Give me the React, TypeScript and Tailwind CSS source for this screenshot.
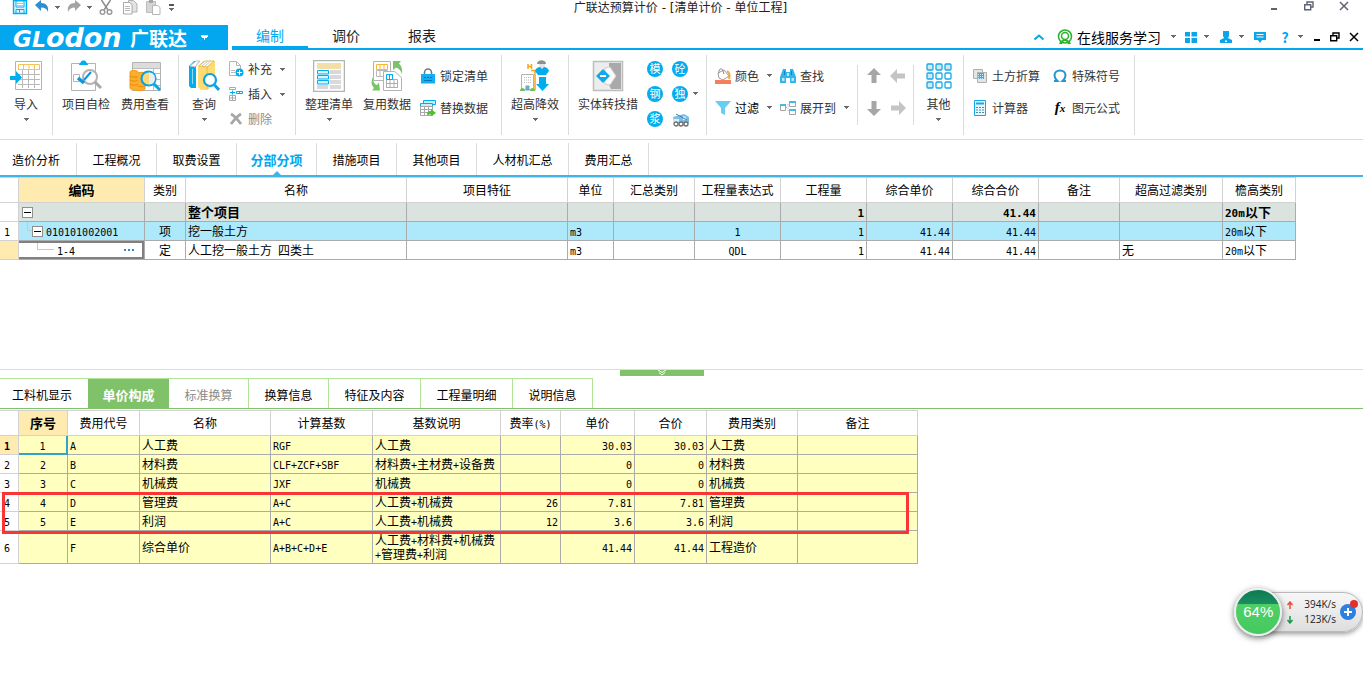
import type { ReactNode } from "react";

/* ---------- text helpers ---------- */

// Latin runs are set in a half-width monospace beside full-width Chinese.
function Mixed({ text, large = false }: { text: string; large?: boolean }) {
  return (
    <>
      {text.split(/([\x20-\x7e]+)/).map((part, i) =>
        i % 2 === 1 ? (
          <span
            key={i}
            className={`whitespace-pre font-['DejaVu_Sans_Mono',monospace] leading-none ${large ? "text-[11px]" : "text-[10px]"}`}
          >
            {part}
          </span>
        ) : (
          part
        ),
      )}
    </>
  );
}

function Caret({ className = "text-[#6b6b6b]" }: { className?: string }) {
  return (
    <svg viewBox="0 0 5 3" className={`h-[3px] w-[5px] shrink-0 ${className}`} shapeRendering="crispEdges" aria-hidden="true">
      <path d="M0 0h5v1H0zM1 1h3v1H1zM2 2h1v1H2z" fill="currentColor" />
    </svg>
  );
}

/* ---------- icons ---------- */

function Svg({ size, className = "", children }: { size: number; className?: string; children: ReactNode }) {
  return (
    <svg viewBox={`0 0 ${size} ${size}`} width={size} height={size} fill="none" className={`shrink-0 ${className}`} aria-hidden="true">
      {children}
    </svg>
  );
}

const BLUE = "#00aeef";

const SaveIcon = () => (
  <Svg size={16}>
    <path d="M1.500.5h13v13h-13z" fill="#d9f2fc" stroke={BLUE} strokeWidth="1.400" />
    <path d="M4 1h8v6H4z" fill="#fff" stroke={BLUE} />
    <path d="M5 3.500h6M5 5.500h6" stroke="#8ad4f3" />
    <path d="M4 13V9.500h8V13M7.500 10v2.500" stroke={BLUE} />
  </Svg>
);
const UndoIcon = () => (
  <Svg size={16}>
    <path d="M1 5 7 0v3c5 0 8 3 7 9-1-3-3-4.500-7-4.500V11z" fill="#2e8fd0" />
  </Svg>
);
const RedoIcon = () => (
  <Svg size={16}>
    <path d="M15 5 9 0v3C4 3 1 6 2 12c1-3 3-4.500 7-4.500V11z" fill="#a3a3a3" />
  </Svg>
);
const CutIcon = () => (
  <Svg size={16}>
    <path d="M3.500 0 10 10M12.500 0 6 10" stroke="#8d8d8d" strokeWidth="1.500" />
    <circle cx="4.500" cy="12" r="2.300" stroke="#9a9a9a" strokeWidth="1.500" />
    <circle cx="11.500" cy="12" r="2.300" stroke="#9a9a9a" strokeWidth="1.500" />
  </Svg>
);
const CopyIcon = () => (
  <Svg size={16}>
    <path d="M6.500 10.500v-10h5l3.500 3.500v8h-5" fill="#e3e3e3" stroke="#b0b0b0" />
    <path d="M1.500 2.500h6l2.500 2v9.500H1.500z" fill="#fff" stroke="#a8a8a8" />
    <path d="M3 6.500h5M3 8.500h5M3 10.500h5" stroke="#b9b9b9" />
  </Svg>
);
const PasteIcon = () => (
  <Svg size={16}>
    <path d="M1.500 1.500h9v11h-9z" fill="#d6d6d6" stroke="#bdbdbd" />
    <path d="M4 0h4v3H4z" fill="#a5a5a5" />
    <path d="M7.500 5.500h5l2.500 2v7H7.500z" fill="#fff" stroke="#b5b5b5" />
  </Svg>
);

const ImportIcon = () => (
  <Svg size={32}>
    <path d="M5.500 1.500h26v28h-26z" fill="#fff" stroke="#b3b3b3" />
    <path d="M8 9.500h22M8 14.500h22M8 19.500h22M8 24.500h22M12.500 9v19M18.500 9v19M24.500 9v19" stroke="#b9b9b9" />
    <path d="M8.500 4.500h21v5h-21zM13.500 4v5M19 4v5M24.500 4v5" stroke="#f6c35a" />
    <path d="M0 16h6v-5l6 6.500-6 6.500v-4H0z" fill={BLUE} />
  </Svg>
);
const CheckDocIcon = () => (
  <Svg size={32}>
    <path d="M1.500 3.500h24v27h-24z" fill="#fff" stroke="#b3b3b3" />
    <path d="M9 5c0-2 2-2 2-3.500C12 0 15 0 16 1.500 16 3 18 3 18 5z" fill={BLUE} />
    <path d="M3.500 14.500h6v7h-6z" stroke="#b5b5b5" />
    <circle cx="20" cy="17" r="7" fill="#fff" stroke="#b3b3b3" strokeWidth="2" />
    <path d="m25 22 6 6" stroke="#a8a8a8" strokeWidth="3" />
    <path d="m8 18 6 5" stroke="#0a96e0" strokeWidth="3.500" />
    <path d="m14 20 7-8" stroke="#0a96e0" strokeWidth="2" />
  </Svg>
);
const CostIcon = () => (
  <Svg size={32}>
    <path d="M3.500 2.500h28v28h-28z" fill="#fff" stroke="#b3b3b3" />
    <path d="M4 3h27v5H4z" fill="#dcdcdc" />
    <path d="M4 8.500h27M17 13.500h14M17 19.500h14M17 25.500h14M24.500 8v22" stroke="#bdbdbd" />
    <path d="M1 12c0-2 8-2 8 0v1c2-1 7-1 7 1v15c-2 2-7 2-9 1-4 0-6-1-6-2z" fill="#ffae2b" stroke="#f39a12" />
    <path d="M1 16c2 1.500 6 1.500 8 .5M1 20c2 1.500 6 1.500 8 .5M1 24c2 1.500 6 1.500 8 .5M9 26c2 1 5 1 7 0" stroke="#e08b10" />
    <circle cx="19.500" cy="18.500" r="7" fill="#ffd874" stroke="#0aa4e6" strokeWidth="2.200" />
    <path d="M20 12.500c4 0 6 3 6 6s-2 6-6 6z" fill="#e9eef2" />
    <path d="m25 24 6 6" stroke="#0aa4e6" strokeWidth="3" />
  </Svg>
);
const BooksIcon = () => (
  <Svg size={32}>
    <path d="M1 6 6 1h6L8 6v22H3l-2-2z" fill={BLUE} />
    <path d="m2 6 6-5h4L7 7z" fill="#fff" stroke="#bcbcbc" />
    <path d="M4.500 9v15" stroke="#8bdcf8" />
    <path d="M10 6 15 1h12v24l-8 5h-6l-3-3z" fill="#ffdb73" />
    <path d="m11 6 6-5h9l-7 6z" fill="#fff" stroke="#e9b94a" />
    <path d="m14 6 6-5M17 6l6-5" stroke="#c9c9c9" />
    <path d="M19 7v22" stroke="#f1bb45" />
    <circle cx="22" cy="20" r="6" fill="#fff" stroke="#0aa4e6" strokeWidth="2.200" />
    <path d="m26.500 25 4.500 5" stroke="#0aa4e6" strokeWidth="3" />
  </Svg>
);
const AddDocIcon = () => (
  <Svg size={16}>
    <path d="M1.500.5h7l4 4v10h-11z" fill="#fff" stroke="#b5b5b5" />
    <path d="M8.500.5v4h4M3 9.500h4M3 11.500h4" stroke="#b5b5b5" />
    <circle cx="11.500" cy="11.500" r="4" fill={BLUE} />
    <path d="M11.500 9v5M9 11.500h5" stroke="#fff" />
  </Svg>
);
const InsertIcon = () => (
  <Svg size={16}>
    <path d="M1.500 1.500h6v2h-6zM1.500 9.500h6v5h-6zM1.500 12h6M4.500 9.500v5" stroke="#a9a9a9" />
    <path d="M2 6.500h5M4.500 4.500v4M8.500 5.500h6v2h-6zM11.500 5v3" stroke={BLUE} />
  </Svg>
);
const DeleteIcon = () => (
  <Svg size={16}>
    <path d="M3 3c4 2 7 6 10 10M13 3C9 5 6 9 3 13" stroke="#a6a6a6" strokeWidth="2.800" />
  </Svg>
);
const ArrangeIcon = () => (
  <Svg size={32}>
    <path d="M.5.500h31v31H.5z" fill="#fff" stroke="#b3b3b3" strokeWidth="1.500" />
    <path d="M4 3h24v6H4z" fill="#f2dfa8" />
    <path d="M17 10h11v4H17zM17 15h11v4H17zM17 20h11v4H17zM17 25h11v4H17zM4 25h11v4H4z" fill="#d9d9dc" />
    <path d="M4.500 10.500h11v3.500h-11zM4.500 15.500h11v3.500h-11zM4.500 20.500h11v3.500h-11z" fill="#d9f2fc" stroke={BLUE} />
  </Svg>
);
const ReuseIcon = () => (
  <Svg size={32}>
    <path d="M2.500 1.500h17v19h-17z" fill="#fff" stroke="#b3b3b3" />
    <path d="M5.500 10.500h11v6h-11zM9 10v7M13 10v7" stroke="#b9b9b9" />
    <path d="M5.500 4.500h11v5h-11zM9 4v5M13 4v5" stroke="#f6b733" />
    <path d="M12.500 11.500h11l7 6v13h-18z" fill="#fff" stroke="#b3b3b3" />
    <path d="M15.500 19.500h11v8h-11zM19 19v8M23 19v8M15.500 23.500h11" stroke="#adadad" />
    <path d="M15.500 14.500h6v5h-6zM18.500 14v5" stroke={BLUE} />
    <path d="M22 1h8l-2 2.500c3 3 3.500 6 3 11-1-4-3-6-6-7L22 10z" fill="#79c36a" />
    <path d="M2 17c0 4 1 7 4 8l2-2.500 1 8H1l2-2.500C0 25 0 21 2 17z" fill="#79c36a" />
  </Svg>
);
const LockIcon = () => (
  <Svg size={16}>
    <path d="M4.500 7V4.500a3.500 3.500 0 0 1 7 0V7" stroke="#6f7a82" strokeWidth="1.600" />
    <path d="M1 6h14v9.500H1z" fill="#12aef0" />
    <path d="M4 9.500h2M7 9.500h2M10 9.500h2M4 12.500h8" stroke="#0770b4" />
  </Svg>
);
const ReplaceIcon = () => (
  <Svg size={16}>
    <path d="M3.500.5h12v4h-12z" fill="#c8eefa" stroke={BLUE} />
    <path d="M.5 3.500h12v3H.5z" fill="#c8eefa" stroke={BLUE} />
    <path d="M.5 6.500h12v9H.5zM.5 9.500h12M.5 12.500h12M4.500 6v9M8.500 6v9" fill="#fff" stroke="#a7a7a7" />
    <path d="M7 15c0-3 1-4 4-4V9l5 4-5 3.500v-2c-2 0-3 0-4 .5z" fill="#4fc02e" />
  </Svg>
);
const HeightIcon = () => (
  <Svg size={32}>
    <path d="M9 4v5M12.500 4v5M9 6.500h4M12 10.500h4v20" stroke="#f6a51f" strokeWidth="1.500" />
    <path d="M2.500 14.500h12v15h-12z" fill="#fff" stroke="#b3b3b3" />
    <path d="M5 17.500h7M5 20h7M5 22.500h7" stroke="#bdbdbd" strokeDasharray="1 1" />
    <path d="M6.500 25.500h4v5h-4z" fill="#6fa9c4" />
    <path d="M1 31c0-4 5-4 5 0zM11 31c0-4 5-4 5 0z" fill="#6fbf5f" />
    <path d="M18 4c0-5 9-5 9 0z" fill="#8f8f8f" />
    <path d="M20 4h6c0 4-1 5-3 5s-3-1-3-5z" fill="#e4e4e4" />
    <path d="M16 11c1-3 3-4 5-4l2 2 2-2c2 0 4 1 5 4l-3 4H19z" fill={BLUE} />
    <path d="M20 17h7v7h3l-6.500 7-6.500-7h3z" fill={BLUE} />
  </Svg>
);
const EntityIcon = () => (
  <Svg size={32}>
    <path d="M1.500 1.500h29v29h-29z" fill="#ededed" stroke="#bdbdbd" strokeWidth="1.500" />
    <path d="M17 3h12v26H19l-2-4z" fill="#a9a9a9" />
    <path d="m13 8 5-1 6 9-6 9-5-1z" fill="#fafafa" stroke="#cfcfcf" />
    <path d="m11 9 7 7-7 7-7-7z" fill="#0fa9ec" />
    <path d="M8 16h6" stroke="#fff" strokeWidth="2" />
  </Svg>
);
const TruckIcon = () => (
  <Svg size={18}>
    <path d="M1 6 12 3l5 3v6H2z" fill="#7fbce4" />
    <path d="M2 8h5v3H2zM11 5l3 1v3h-3z" fill="#d9effa" />
    <path d="m4 3 11 6" stroke="#3f83b4" />
    <circle cx="4" cy="13" r="2" fill="#fff" stroke="#6c6c6c" strokeWidth="1.300" />
    <circle cx="9" cy="13" r="2" fill="#fff" stroke="#6c6c6c" strokeWidth="1.300" />
    <circle cx="14" cy="13" r="2" fill="#fff" stroke="#6c6c6c" strokeWidth="1.300" />
  </Svg>
);
const ColorIcon = () => (
  <Svg size={16}>
    <path d="m3 5 6-3 5 6-6 4-4-2z" fill="#fff" stroke="#a29a94" />
    <path d="M4 5C3 1 7-1 8 3l1 3" stroke="#8d8782" />
    <path d="M12 3c3 2 3 5 2 8" stroke="#f5a545" strokeWidth="2" />
    <path d="M0 12h16v4H0z" fill="#f47f5e" />
  </Svg>
);
const FilterIcon = () => (
  <Svg size={16}>
    <path d="M0 1h16l-6 7v7l-4-2V8z" fill="#67cdf2" />
  </Svg>
);
const BinocularsIcon = () => (
  <Svg size={16}>
    <path d="M3 1h3v3h4V1h3l3 8v6h-6v-5H6v5H0V9z" fill="#2fb6ea" />
    <path d="M2 10h2.500v3H2zM11.500 10H14v3h-2.500zM7 5h2v3H7z" fill="#b9e8f8" />
    <path d="M4.500 3v4M11.500 3v4" stroke="#1883b8" />
  </Svg>
);
const ExpandIcon = () => (
  <Svg size={16}>
    <path d="M.5 4.500h5v6h-5zM9.500 1.500h6v5h-6zM9.500 9.500h6v5h-6z" fill="#fff" stroke="#a3a3a3" />
    <path d="M0 5h6M9 2h7M9 10h7" stroke="#46b9e8" strokeWidth="2" />
    <path d="M6 7.500h2M8 4v8" stroke="#b5b5b5" strokeDasharray="1 1" />
  </Svg>
);
const GridIcon = () => (
  <Svg size={26}>
    {[0, 1, 2].flatMap((r) =>
      [0, 1, 2].map((c) => (
        <rect
          key={`${r}${c}`}
          x={1 + c * 9}
          y={1 + r * 9}
          width="6"
          height="6"
          rx="1"
          fill={r === 0 || c === 0 ? "#cfe9f5" : "#fff"}
          stroke="#14a9e8"
          strokeWidth="1.300"
        />
      )),
    )}
  </Svg>
);
const EarthIcon = () => (
  <Svg size={16}>
    <path d="M1.500 1.500h9v9h-9z" fill="#e4e4e4" stroke="#b0b0b0" />
    <path d="M5.500 4.500h9v10h-9z" fill="#e4e4e4" stroke="#b0b0b0" />
    <path d="M6 5h6v6H6z" fill="#2fb4e6" />
    <path d="M6 6.500h6M6 8.500h6M6 10.500h6" stroke="#bfe9f8" strokeDasharray="1 1" />
  </Svg>
);
const CalcIcon = () => (
  <Svg size={16}>
    <path d="M2.500.500h11v15h-11z" fill="#eaf8fe" stroke="#12a8e6" />
    <path d="M4 3.500h8" stroke="#12a8e6" strokeWidth="2" />
    <path d="M4 7.500h8M4 10h8M4 12.500h8" stroke="#3d8cb8" strokeDasharray="2 1" />
  </Svg>
);
const OmegaIcon = () => (
  <Svg size={16}>
    <path
      d="M2 13h3.500c-2-2-3-3.500-3-5.500C2.500 4.500 5 2.500 8 2.500s5.500 2 5.500 5c0 2-1 3.500-3 5.500H14"
      stroke="#2196d3"
      strokeWidth="2"
    />
  </Svg>
);
const BigArrow = ({ className, color }: { className?: string; color: string }) => (
  <Svg size={16} className={className}>
    <path d="m8 0 7 7h-4.500v8h-5V7H1z" fill={color} />
  </Svg>
);

const HeadsetIcon = () => (
  <Svg size={16}>
    <circle cx="8" cy="7.500" r="6.500" stroke="#2bb52b" strokeWidth="1.600" />
    <circle cx="8" cy="7" r="3.500" stroke="#2bb52b" strokeWidth="1.500" />
    <path d="M2 15c1-3 3-4.500 6-4.500s5 1.500 6 4.500h-3l-2-3H7l-2 3z" fill="#2bb52b" />
  </Svg>
);
const TilesIcon = () => (
  <Svg size={12}>
    <path d="M0 1h5v4.500H0zM6.500 1H12v4.500H6.500zM0 7h5v5H0zM6.500 7H12v5H6.500z" fill="#0aa5ea" />
  </Svg>
);
const PersonIcon = () => (
  <Svg size={14}>
    <path d="M4 1h6v5L9 8l4 2v3H1v-3l4-2-1-2z" fill="#0aa5ea" />
    <path d="m6 10 1 1 1-1v2H6z" fill="#fff" />
  </Svg>
);
const ChatIcon = () => (
  <Svg size={12}>
    <path d="M0 1h12v8H8l-2 3-2-3H0z" fill="#0aa5ea" />
    <path d="M2.500 3.500h7M2.500 6h7" stroke="#fff" />
  </Svg>
);
const RestoreIcon = () => (
  <Svg size={10}>
    <path d="M3 3V1h6v5H7" stroke="currentColor" strokeWidth="1.400" />
    <path d="M.7 3.700h6v5h-6z" stroke="currentColor" strokeWidth="1.400" />
  </Svg>
);
const CloseIcon = () => (
  <Svg size={10}>
    <path d="m1 1 8 8M9 1 1 9" stroke="currentColor" strokeWidth="1.500" />
  </Svg>
);
const MinIcon = () => (
  <Svg size={10}>
    <path d="M2 8h6" stroke="currentColor" strokeWidth="2" />
  </Svg>
);

/* ---------- ribbon parts ---------- */

function Group({ children, className = "", short = false }: { children: ReactNode; className?: string; short?: boolean }) {
  return (
    <div className={`flex shrink-0 items-center border-r border-[#dcdcdc] ${short ? "h-[60px]" : "h-20"} ${className}`}>
      {children}
    </div>
  );
}

function BigButton({ icon, label, caret = false, className }: { icon: ReactNode; label: string; caret?: boolean; className: string }) {
  return (
    <button type="button" className={`flex h-[70px] shrink-0 flex-col items-center ${className}`}>
      <span className="flex h-8 items-center">{icon}</span>
      <span className="mt-0.5 whitespace-nowrap leading-5">{label}</span>
      {caret && <Caret className="mt-1 text-[#6b6b6b]" />}
    </button>
  );
}

function SmallButton({ icon, label, caret = false, tone = "" }: { icon: ReactNode; label: string; caret?: boolean; tone?: string }) {
  return (
    <button type="button" className={`flex h-5 items-center gap-1 whitespace-nowrap ${tone}`}>
      {icon}
      <span>{label}</span>
      {caret && <Caret className="ml-1 text-[#6b6b6b]" />}
    </button>
  );
}

// Two stacked ribbon commands.
function Pair({ children, className = "" }: { children: ReactNode; className?: string }) {
  return <div className={`flex flex-col gap-3 pb-1.5 ${className}`}>{children}</div>;
}

function Disc({ label }: { label: string }) {
  return (
    <button type="button" className="flex size-4 items-center justify-center rounded-full bg-[#00aeef] text-[11px] leading-none text-white">
      {label}
    </button>
  );
}

function Ribbon() {
  return (
    <div className="flex h-[90px] items-center overflow-hidden border-b border-[#dcdcdc] text-[#333]">
      <Group className="w-[53px] justify-center">
        <BigButton className="w-12" icon={<ImportIcon />} label="导入" caret />
      </Group>
      <Group className="w-[126px] justify-center">
        <BigButton className="w-[59px]" icon={<CheckDocIcon />} label="项目自检" />
        <BigButton className="w-[59px]" icon={<CostIcon />} label="费用查看" />
      </Group>
      <Group className="w-[117px] pl-px">
        <BigButton className="w-12" icon={<BooksIcon />} label="查询" caret />
        <div className="flex flex-col gap-[5px] pb-px">
          <SmallButton icon={<AddDocIcon />} label="补充" caret />
          <SmallButton icon={<InsertIcon />} label="插入" caret />
          <SmallButton icon={<DeleteIcon />} label="删除" tone="text-[#8c8c8c]" />
        </div>
      </Group>
      <Group className="w-[206px] pl-1">
        <BigButton className="w-[58px]" icon={<ArrangeIcon />} label="整理清单" caret />
        <BigButton className="w-[58px]" icon={<ReuseIcon />} label="复用数据" />
        <Pair className="ml-1">
          <SmallButton icon={<LockIcon />} label="锁定清单" />
          <SmallButton icon={<ReplaceIcon />} label="替换数据" />
        </Pair>
      </Group>
      <Group className="w-[67px] justify-center">
        <BigButton className="w-[60px]" icon={<HeightIcon />} label="超高降效" caret />
      </Group>
      <Group className="w-[138px]">
        <BigButton className="w-[78px]" icon={<EntityIcon />} label="实体转技措" />
        <div className="grid grid-cols-[16px_16px_8px] items-center gap-x-[9px] gap-y-[9px] pb-0.5">
          <Disc label="模" />
          <Disc label="砼" />
          <span />
          <Disc label="钢" />
          <Disc label="独" />
          <button type="button" aria-label="更多构件" className="-ml-1">
            <Caret />
          </button>
          <Disc label="浆" />
          <button type="button" aria-label="运输机械" className="size-4">
            <TruckIcon />
          </button>
        </div>
      </Group>
      <Group className="w-[150px] gap-2 border-r-0 pl-2">
        <Pair>
          <SmallButton icon={<ColorIcon />} label="颜色" caret />
          <SmallButton icon={<FilterIcon />} label="过滤" caret tone="text-black" />
        </Pair>
        <Pair>
          <SmallButton icon={<BinocularsIcon />} label="查找" />
          <SmallButton icon={<ExpandIcon />} label="展开到" caret />
        </Pair>
      </Group>
      <Group short className="w-[57px] justify-center border-l">
        <div className="grid grid-cols-2 gap-x-2 gap-y-4 pb-1.5">
          <button type="button" aria-label="上移">
            <BigArrow color="#a6a6a6" />
          </button>
          <button type="button" aria-label="左移">
            <BigArrow color="#c4c4c4" className="-rotate-90" />
          </button>
          <button type="button" aria-label="下移">
            <BigArrow color="#a6a6a6" className="rotate-180" />
          </button>
          <button type="button" aria-label="右移">
            <BigArrow color="#c4c4c4" className="rotate-90" />
          </button>
        </div>
      </Group>
      <Group className="w-[50px] justify-center">
        <BigButton className="w-10" icon={<GridIcon />} label="其他" caret />
      </Group>
      <Group className="w-[171px] gap-3 pl-2">
        <Pair>
          <SmallButton icon={<EarthIcon />} label="土方折算" />
          <SmallButton icon={<CalcIcon />} label="计算器" />
        </Pair>
        <Pair>
          <SmallButton icon={<OmegaIcon />} label="特殊符号" />
          <SmallButton
            icon={
              <span className="w-4 text-center font-['Liberation_Serif',serif] text-[15px] font-bold italic leading-none text-black">
                f<span className="text-[11px]">x</span>
              </span>
            }
            label="图元公式"
          />
        </Pair>
      </Group>
    </div>
  );
}

/* ---------- title and menu rows ---------- */

function TitleBar() {
  return (
    <header className="flex h-[25px] items-start text-[#222]">
      <div className="flex h-[15px] flex-1 items-center pl-3">
        <button type="button" aria-label="保存" className="w-[22px]">
          <SaveIcon />
        </button>
        <button type="button" aria-label="撤销" className="w-[21px]">
          <UndoIcon />
        </button>
        <Caret />
        <button type="button" aria-label="恢复" className="ml-[6px] w-[21px]">
          <RedoIcon />
        </button>
        <Caret />
        <button type="button" aria-label="剪切" className="ml-[6px] w-6">
          <CutIcon />
        </button>
        <button type="button" aria-label="复制" className="w-[23px]">
          <CopyIcon />
        </button>
        <button type="button" aria-label="粘贴" className="w-6">
          <PasteIcon />
        </button>
        <button type="button" aria-label="自定义快速访问" className="flex flex-col items-center gap-0.5 text-[#555]">
          <span className="h-0.5 w-[5px] bg-current" />
          <Caret />
        </button>
      </div>
      <h1 className="font-['DejaVu_Sans','Noto_Sans_CJK_SC',sans-serif] text-[12px] leading-4">广联达预算计价 - [清单计价 - 单位工程]</h1>
      <div className="flex h-3 flex-1 items-center justify-end gap-[25px] pr-[14px] text-[#5f6273]">
        <button type="button" aria-label="最小化">
          <MinIcon />
        </button>
        <button type="button" aria-label="还原">
          <RestoreIcon />
        </button>
        <button type="button" aria-label="关闭">
          <CloseIcon />
        </button>
      </div>
    </header>
  );
}

function MenuRow() {
  const cell = "flex h-full shrink-0 items-center justify-center";
  return (
    <div className="flex h-[25px] bg-white">
      <button type="button" className="flex w-[228px] shrink-0 items-center overflow-hidden bg-[#02a7f0] pl-[13px] text-white">
        <span className="w-[117px] whitespace-nowrap text-left font-['DejaVu_Sans',sans-serif] text-[27px] font-bold italic leading-none">
          <span className="text-[23px]">G</span>
          <span className="text-[22px]">L</span>odon
        </span>
        <span className="text-[19px] font-bold leading-none">广联达</span>
        <Caret className="ml-[15px] scale-150 text-white" />
      </button>
      <div className="ml-1 flex min-w-0 flex-1 items-stretch border-b-2 border-[#02a7f0] text-[14px] leading-5">
        <button type="button" className="w-[76px] shrink-0 border-b-2 border-[#02a7f0] pb-0.5 text-[#02a7f0]">
          编制
        </button>
        <button type="button" className="w-[76px] shrink-0 pb-1 text-[#222]">
          调价
        </button>
        <button type="button" className="w-[76px] shrink-0 pb-1 text-[#222]">
          报表
        </button>
        <div className="ml-auto flex items-center text-black">
          <button type="button" aria-label="收起功能区" className="mr-3">
            <Svg size={12}>
              <path d="m1.500 8.500 4.500-4 4.500 4" stroke="#02a7f0" strokeWidth="2" />
            </Svg>
          </button>
          <button type="button" className="flex items-center gap-1">
            <HeadsetIcon />
            <span className="whitespace-nowrap">在线服务学习</span>
            <span className="flex w-4 justify-center">
              <Caret />
            </span>
          </button>
          <button type="button" aria-label="应用" className="ml-1 flex items-center">
            <TilesIcon />
            <span className={`${cell} w-[18px]`}>
              <Caret />
            </span>
          </button>
          <button type="button" aria-label="用户" className="ml-1 flex items-center">
            <PersonIcon />
            <span className={`${cell} w-4`}>
              <Caret />
            </span>
          </button>
          <button type="button" aria-label="消息" className={`${cell} mr-2 w-[21px]`}>
            <ChatIcon />
          </button>
          <button type="button" className="flex items-center text-[14px] font-bold text-[#02a7f0]">
            <span className="w-[14px] text-center">?</span>
            <span className={`${cell} w-4`}>
              <Caret />
            </span>
          </button>
          <button type="button" aria-label="最小化文档" className={`${cell} w-[18px]`}>
            <MinIcon />
          </button>
          <button type="button" aria-label="还原文档" className={`${cell} w-[18px]`}>
            <RestoreIcon />
          </button>
          <button type="button" aria-label="关闭文档" className={`${cell} w-[19px]`}>
            <CloseIcon />
          </button>
        </div>
      </div>
    </div>
  );
}

/* ---------- upper sheet ---------- */

const SHEETS = [
  { name: "造价分析", className: "w-[77px]" },
  { name: "工程概况", className: "w-20" },
  { name: "取费设置", className: "w-20" },
  { name: "分部分项", className: "w-20 text-[13px] font-bold text-[#02a7f0]", active: true },
  { name: "措施项目", className: "w-20" },
  { name: "其他项目", className: "w-20" },
  { name: "人材机汇总", className: "w-[92px]" },
  { name: "费用汇总", className: "w-20" },
];

function SheetTabs() {
  return (
    <nav className="flex h-[37px] items-stretch border-b-2 border-[#41b4e6] pt-[3px]">
      {SHEETS.map((s, i) => (
        <button
          key={s.name}
          type="button"
          className={`relative shrink-0 whitespace-nowrap border-r border-[#dcdcdc] pt-px leading-none ${i === 0 ? "pr-1" : ""} ${s.className}`}
        >
          {s.name}
          {s.active && (
            <svg viewBox="0 0 8 4" className="absolute bottom-0 left-1/2 h-1 w-2 -translate-x-1/2" aria-hidden="true">
              <path d="m0 4 4-4 4 4z" fill="#41b4e6" />
            </svg>
          )}
        </button>
      ))}
    </nav>
  );
}

const HEAD = "h-[25px] border-b border-r border-[#d2d2d2] p-0 font-normal";
const LINE = "h-[19px] border-b border-r border-[#ababab]";

type Align = "l" | "c" | "r";
const ALIGN: Record<Align, string> = { l: "text-left pl-0.5", c: "text-center", r: "text-right pr-0.5" };

const TOP_COLS: { name: string; align: Align; width: string }[] = [
  { name: "编码", align: "l", width: "w-[126px]" },
  { name: "类别", align: "c", width: "w-[41px]" },
  { name: "名称", align: "l", width: "w-[221px]" },
  { name: "项目特征", align: "l", width: "w-[161px]" },
  { name: "单位", align: "l", width: "w-[46px]" },
  { name: "汇总类别", align: "l", width: "w-[81px]" },
  { name: "工程量表达式", align: "c", width: "w-[86px]" },
  { name: "工程量", align: "r", width: "w-[86px]" },
  { name: "综合单价", align: "r", width: "w-[86px]" },
  { name: "综合合价", align: "r", width: "w-[86px]" },
  { name: "备注", align: "l", width: "w-[81px]" },
  { name: "超高过滤类别", align: "l", width: "w-[103px]" },
  { name: "檐高类别", align: "l", width: "w-[73px]" },
];

const TOP_ROWS = [
  {
    no: "",
    tone: "bg-[#dae3de] text-[13px] font-bold",
    cells: ["", "", "整个项目", "", "", "", "", "1", "", "41.44", "", "", "20m以下"],
  },
  {
    no: "1",
    tone: "bg-[#aee8fb]",
    cells: ["010101002001", "项", "挖一般土方", "", "m3", "", "1", "1", "41.44", "41.44", "", "", "20m以下"],
  },
  {
    no: "",
    tone: "bg-white",
    cells: ["1-4", "定", "人工挖一般土方 四类土", "", "m3", "", "QDL", "1", "41.44", "41.44", "", "无", "20m以下"],
  },
];

function Collapse() {
  return (
    <button
      type="button"
      aria-label="折叠"
      className="flex size-[11px] shrink-0 items-center justify-center border border-[#8f8f8f] bg-white"
    >
      <span className="h-px w-[7px] bg-black" />
    </button>
  );
}

function CodeCell({ row, text }: { row: number; text: string }) {
  if (row === 0) {
    return (
      <div className="flex h-[18px] items-center pl-[3px]">
        <Collapse />
      </div>
    );
  }
  if (row === 1) {
    return (
      <div className="flex h-[18px] items-center pl-2">
        <span className="h-[18px] w-[5px]">
          <span className="block h-[9px] border-b border-l border-[#c9c9c9]" />
        </span>
        <Collapse />
        <span className="ml-[3px] leading-4">
          <Mixed text={text} />
        </span>
      </div>
    );
  }
  return (
    <div className="flex h-[18px] items-center border-2 border-l-0 border-[#808080] pl-[18px] pr-2">
      <span className="h-[14px] w-[17px]">
        <span className="block h-[7px] border-b border-l border-[#c9c9c9]" />
      </span>
      <span className="ml-[3px] leading-[14px]">
        <Mixed text={text} />
      </span>
      <button type="button" aria-label="选择定额" className="ml-auto flex gap-0.5">
        <span className="size-0.5 bg-[#2f86d2]" />
        <span className="size-0.5 bg-[#2f86d2]" />
        <span className="size-0.5 bg-[#2f86d2]" />
      </button>
    </div>
  );
}

function TopTable() {
  return (
    <div className="h-48 overflow-hidden">
      <table className="w-[1296px] table-fixed border-separate border-spacing-0 border-t border-[#d2d2d2]">
        <thead>
          <tr>
            <th className={`${HEAD} w-[19px]`} aria-label="行号" />
            {TOP_COLS.map((c, i) => (
              <th key={c.name} scope="col" className={`${HEAD} ${c.width} ${i === 0 ? "bg-[#ffebb0]" : ""}`}>
                {i === 0 ? <b className="text-[13px]">{c.name}</b> : c.name}
              </th>
            ))}
          </tr>
        </thead>
        <tbody>
          {TOP_ROWS.map((row, r) => (
            <tr key={r}>
              <th
                scope="row"
                className={`h-[19px] border-b border-r border-[#d2d2d2] p-0 pr-1 font-normal leading-4 ${r === 2 ? "bg-[#ffebb0]" : ""}`}
              >
                <Mixed text={row.no} />
              </th>
              {row.cells.map((text, i) => (
                <td key={i} className={`${LINE} ${row.tone} py-0 leading-4 ${i === 0 ? "p-0" : ALIGN[TOP_COLS[i].align]}`}>
                  {i === 0 ? <CodeCell row={r} text={text} /> : <Mixed text={text} large={r === 0} />}
                </td>
              ))}
            </tr>
          ))}
        </tbody>
      </table>
    </div>
  );
}

/* ---------- lower sheet ---------- */

const DETAIL_TABS = [
  { name: "工料机显示", className: "w-[88px] pr-1 text-black" },
  { name: "单价构成", className: "w-[81px] bg-[#80c269] text-[13px] font-bold text-white" },
  { name: "标准换算", className: "w-20 border-r text-[#8a8a8a]" },
  { name: "换算信息", className: "w-20 border-r text-black" },
  { name: "特征及内容", className: "w-[92px] border-r text-black" },
  { name: "工程量明细", className: "w-[92px] border-r text-black" },
  { name: "说明信息", className: "w-20 border-r text-black" },
];

const LOW_COLS: { name: string; align: Align; width: string }[] = [
  { name: "序号", align: "c", width: "w-[49px]" },
  { name: "费用代号", align: "l", width: "w-[72px]" },
  { name: "名称", align: "l", width: "w-[131px]" },
  { name: "计算基数", align: "l", width: "w-[102px]" },
  { name: "基数说明", align: "l", width: "w-[128px]" },
  { name: "费率(%)", align: "r", width: "w-[60px]" },
  { name: "单价", align: "r", width: "w-[74px]" },
  { name: "合价", align: "r", width: "w-[72px]" },
  { name: "费用类别", align: "l", width: "w-[91px]" },
  { name: "备注", align: "l", width: "w-[120px]" },
];

const LOW_ROWS = [
  ["1", "A", "人工费", "RGF", "人工费", "", "30.03", "30.03", "人工费", ""],
  ["2", "B", "材料费", "CLF+ZCF+SBF", "材料费+主材费+设备费", "", "0", "0", "材料费", ""],
  ["3", "C", "机械费", "JXF", "机械费", "", "0", "0", "机械费", ""],
  ["4", "D", "管理费", "A+C", "人工费+机械费", "26", "7.81", "7.81", "管理费", ""],
  ["5", "E", "利润", "A+C", "人工费+机械费", "12", "3.6", "3.6", "利润", ""],
  ["", "F", "综合单价", "A+B+C+D+E", "人工费+材料费+机械费+管理费+利润", "", "41.44", "41.44", "工程造价", ""],
];

function LowerPane() {
  return (
    <section className="border-t border-[#dcdcdc]">
      <div className="flex h-2 justify-center">
        <button type="button" aria-label="折叠明细" className="-ml-[39px] flex h-[6px] w-[84px] items-center justify-center bg-[#80c269]">
          <svg viewBox="0 0 10 6" width="10" height="6" fill="none" aria-hidden="true">
            <path d="m1 0 4 2.500L9 0M2 2.500l3 2.500 3-2.500" stroke="#fff" />
          </svg>
        </button>
      </div>
      <nav className="flex h-[31px] items-stretch border-b border-[#80c269]">
        {DETAIL_TABS.map((t) => (
          <button key={t.name} type="button" className={`shrink-0 border-t border-[#b0e497] pt-0.5 leading-none ${t.className}`}>
            {t.name}
          </button>
        ))}
      </nav>
      <div className="relative mt-px w-[918px]">
        <table className="w-full table-fixed border-separate border-spacing-0 border-t border-[#d2d2d2]">
          <thead>
            <tr>
              <th className={`${HEAD} w-[19px]`} aria-label="行号" />
              {LOW_COLS.map((c, i) => (
                <th key={c.name} scope="col" className={`${HEAD} ${c.width} ${i === 0 ? "bg-[#ffebb0]" : ""}`}>
                  {i === 0 ? <b className="text-[13px]">{c.name}</b> : <Mixed text={c.name} />}
                </th>
              ))}
            </tr>
          </thead>
          <tbody>
            {LOW_ROWS.map((cells, r) => (
              <tr key={r}>
                <th
                  scope="row"
                  className={`border-b border-r border-[#d2d2d2] p-0 pr-1 leading-4 ${r === 5 ? "h-[33px]" : "h-[19px]"} ${
                    r === 0 ? "bg-[#ffebb0] font-bold" : "font-normal"
                  }`}
                >
                  <Mixed text={String(r + 1)} />
                </th>
                {cells.map((text, i) => (
                  <td
                    key={i}
                    className={`bg-[#ffffc0] py-0 ${ALIGN[LOW_COLS[i].align]} ${i === 4 && r === 5 ? "leading-[14px]" : "leading-4"} ${
                      r === 0 && i === 0 ? "h-[19px] border-b-2 border-r-2 border-[#33a3cc]" : LINE
                    }`}
                  >
                    <Mixed text={text} />
                  </td>
                ))}
              </tr>
            ))}
          </tbody>
        </table>
        <div className="pointer-events-none absolute bottom-[30px] left-0.5 right-[9px] top-[82px] border-[3px] border-[#fb3535]" />
      </div>
    </section>
  );
}

/* ---------- floating network meter ---------- */

function NetMeter() {
  return (
    <aside className="absolute bottom-[50px] right-0 flex items-center font-['Open_Sans','Noto_Sans',sans-serif]">
      <div className="z-10 -mr-6 flex size-12 items-center justify-center rounded-full border-2 border-[#e9efec] bg-[linear-gradient(#0d7a50_0%,#1c8d62_32%,#4fd067_33%,#45c95f_100%)] font-['Liberation_Sans',sans-serif] text-[15px] text-white shadow-[0_2px_6px_rgba(0,0,0,0.55)]">
        64%
      </div>
      <div className="flex h-10 items-center rounded-r-full border border-[#b9b9b9] bg-gradient-to-b from-[#f7f7f7] to-[#dedede] pl-[27px] pr-[6px] shadow-[0_2px_5px_rgba(0,0,0,0.4)]">
        <div className="text-[10px] leading-[15px] text-[#1c1c1c]">
          <div className="flex items-center gap-[10px]">
            <Svg size={8}>
              <path d="M4 8V2M1.500 4 4 1l2.500 3" stroke="#ee4c33" strokeWidth="1.500" />
            </Svg>
            394K/s
          </div>
          <div className="flex items-center gap-[10px]">
            <Svg size={8}>
              <path d="M4 0v6M1.500 4 4 7l2.500-3" stroke="#17994a" strokeWidth="1.500" />
            </Svg>
            123K/s
          </div>
        </div>
        <button type="button" aria-label="加速" className="relative ml-1 flex size-4 items-center justify-center rounded-full bg-[#2f7fe0]">
          <Svg size={10}>
            <path d="M5 1v8M1 5h8" stroke="#fff" strokeWidth="2" />
          </Svg>
          <span className="absolute -right-0.5 -top-1 size-2 rounded-full bg-[#e0322b]" />
        </button>
      </div>
    </aside>
  );
}

export default function App() {
  return (
    <div className="relative min-h-screen overflow-hidden bg-white font-['Noto_Sans_CJK_SC',sans-serif] text-[12px] text-black">
      <TitleBar />
      <MenuRow />
      <Ribbon />
      <SheetTabs />
      <TopTable />
      <LowerPane />
      <NetMeter />
    </div>
  );
}
